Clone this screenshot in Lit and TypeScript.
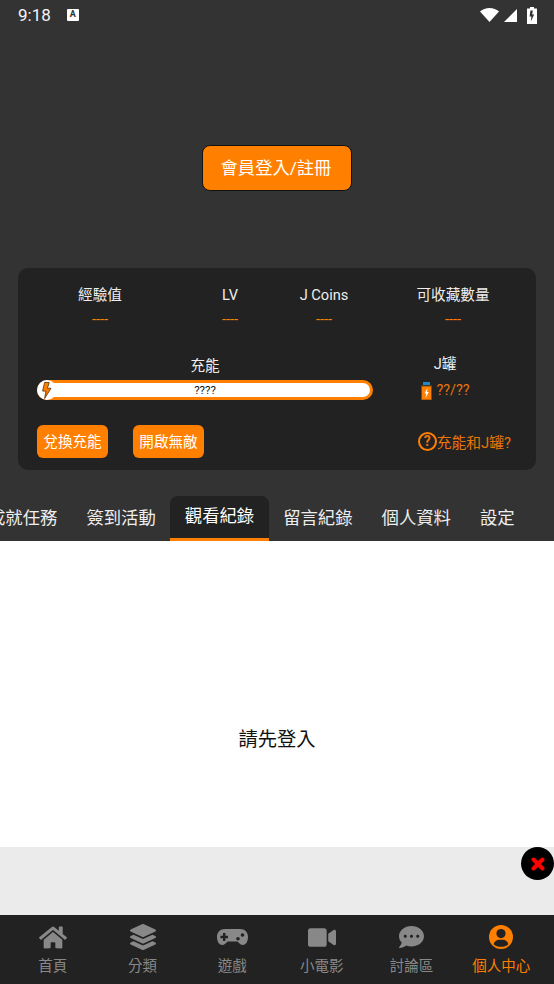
import { LitElement, html, css, svg } from "lit";
import { customElement } from "lit/decorators.js";

const stats = [
  ["經驗值", "----"],
  ["LV", "----"],
  ["J Coins", "----"],
  ["可收藏數量", "----"],
];
const tabs = ["成就任務", "簽到活動", "觀看紀錄", "留言紀錄", "個人資料", "設定"];

const homeIcon = html`<svg class="i-home" viewBox="0 0 576 512"><path d="M280.37 148.26L96 300.11V464a16 16 0 0 0 16 16l112.06-.29a16 16 0 0 0 15.92-16V368a16 16 0 0 1 16-16h64a16 16 0 0 1 16 16v95.64a16 16 0 0 0 16 16.05L464 480a16 16 0 0 0 16-16V300L295.67 148.26a12.19 12.19 0 0 0-15.3 0zM571.6 251.47L488 182.56V44.05a12 12 0 0 0-12-12h-56a12 12 0 0 0-12 12v72.61L318.47 43a48 48 0 0 0-61 0L4.34 251.47a12 12 0 0 0-1.6 16.9l25.5 31A12 12 0 0 0 45.15 301l235.22-193.74a12.19 12.19 0 0 1 15.3 0L530.9 301a12 12 0 0 0 16.9-1.6l25.5-31a12 12 0 0 0-1.7-16.93z"/></svg>`;
const layersIcon = html`<svg class="i-layers" viewBox="0 0 512 512"><path d="M12.41 148.02l232.94 105.67c6.8 3.09 14.49 3.09 21.29 0l232.94-105.67c16.55-7.51 16.55-32.52 0-40.03L266.65 2.31a25.607 25.607 0 0 0-21.29 0L12.41 107.98c-16.55 7.51-16.55 32.53 0 40.04zm487.18 88.28l-58.09-26.33-161.64 73.27c-7.56 3.43-15.59 5.17-23.86 5.17s-16.29-1.74-23.86-5.17L70.51 209.97l-58.1 26.33c-16.55 7.5-16.55 32.5 0 40l232.94 105.59c6.8 3.08 14.49 3.08 21.29 0L499.59 276.3c16.55-7.5 16.55-32.5 0-40zm0 127.8l-57.87-26.23-161.86 73.37c-7.56 3.43-15.59 5.17-23.86 5.17s-16.29-1.74-23.86-5.17L70.29 337.87 12.41 364.1c-16.55 7.5-16.55 32.5 0 40l232.94 105.59c6.8 3.08 14.49 3.08 21.29 0L499.59 404.1c16.55-7.5 16.55-32.5 0-40z"/></svg>`;
const padIcon = html`<svg class="i-pad" viewBox="0 0 31 16"><path d="M8 0H23C28 0 31 3.5 31 8C31 13 28.5 16 25.8 16C23.5 16 22 14 20.5 12.5H10.5C9 14 7.5 16 5.2 16C2.5 16 0 13 0 8C0 3.5 3 0 8 0Z"/><path class="cut" d="M6 4H8.4V6.8H11V9.2H8.4V12H6V9.2H3.4V6.8H6Z"/><circle class="cut" cx="21" cy="9.8" r="1.8"/><circle class="cut" cx="25.5" cy="6" r="1.8"/></svg>`;
const videoIcon = html`<svg class="i-video" viewBox="0 0 576 512"><path d="M336.2 64H47.8C21.4 64 0 85.4 0 111.8v288.4C0 426.6 21.4 448 47.8 448h288.4c26.4 0 47.8-21.4 47.8-47.8V111.8c0-26.4-21.4-47.8-47.8-47.8zm189.4 37.7L416 177.3v157.4l109.6 75.5c21.2 14.6 50.4-.3 50.4-25.8V127.5c0-25.4-29.1-40.4-50.4-25.8z"/></svg>`;
const chatIcon = html`<svg class="i-chat" viewBox="0 32 512 448"><path d="M256 32C114.6 32 0 125.1 0 240c0 49.6 21.4 95 57 130.7C44.5 421.1 2.7 466 2.2 466.5c-2.2 2.3-2.8 5.7-1.5 8.7S4.8 480 8 480c66.3 0 116-31.8 140.6-51.4 32.7 12.3 69 19.4 107.4 19.4 141.4 0 256-93.1 256-208S397.4 32 256 32zM128 272c-17.7 0-32-14.3-32-32s14.3-32 32-32 32 14.3 32 32-14.3 32-32 32zm128 0c-17.7 0-32-14.3-32-32s14.3-32 32-32 32 14.3 32 32-14.3 32-32 32zm128 0c-17.7 0-32-14.3-32-32s14.3-32 32-32 32 14.3 32 32-14.3 32-32 32z"/></svg>`;
const userIcon = html`<svg class="i-user" viewBox="0 0 24 24"><circle cx="12" cy="12" r="12"/><circle class="cut" cx="12" cy="8.6" r="4.6"/><path class="cut" d="M4.6 19.2C5.4 16.4 7.8 14.8 10 14.8H14C16.2 14.8 18.6 16.4 19.4 19.2C17.4 21 14.9 21.8 12 21.8C9.1 21.8 6.6 21 4.6 19.2Z"/></svg>`;

const navItems = [
  { label: "首頁", icon: homeIcon },
  { label: "分類", icon: layersIcon },
  { label: "遊戲", icon: padIcon },
  { label: "小電影", icon: videoIcon },
  { label: "討論區", icon: chatIcon },
  { label: "個人中心", icon: userIcon, active: true },
];

const bolt = svg`<path d="M7.2 0H2.6L0.6 8.6H4L2.6 16L9 5.8H5.4Z"/>`;

@customElement("app-root")
export class AppRoot extends LitElement {
  static styles = css`
    :host {
      display: flex;
      flex-direction: column;
      width: 554px;
      height: 984px;
      overflow: hidden;
      background: #333;
      color: #fff;
      font-family: Roboto, "Noto Sans CJK TC", sans-serif;
    }
    .status {
      height: 30px;
      flex: none;
      display: flex;
      align-items: center;
      padding: 0 17px 0 18px;
      box-sizing: border-box;
    }
    .time { font-size: 17px; line-height: 30px; color: #f4f4f4; }
    .a-badge {
      width: 12px;
      height: 12px;
      margin-left: 16px;
      background: #fff;
      border-radius: 1px;
      color: #333;
      font-size: 9px;
      font-weight: 700;
      line-height: 11px;
      text-align: center;
    }
    .sys { margin-left: auto; display: flex; align-items: center; }
    .sys svg { display: block; fill: #fff; }
    .wifi { width: 19px; height: 14px; }
    .signal { width: 13px; height: 13px; margin-left: 5px; }
    .batt { width: 10px; height: 17px; margin-left: 10px; }
    .batt .cut { fill: #333; }

    .hero { flex: none; display: flex; justify-content: center; padding: 115px 0 77px; }
    .login {
      width: 150px;
      height: 46px;
      box-sizing: border-box;
      display: flex;
      align-items: center;
      justify-content: center;
      background: #ff7f00;
      border: 1px solid #111;
      border-radius: 8px;
      font-size: 17.3px;
      padding: 0 2px 4px 0;
    }

    .panel {
      flex: none;
      margin: 0 18px;
      height: 202px;
      box-sizing: border-box;
      background: #222;
      border-radius: 10px;
      padding-top: 16px;
    }
    .stats { display: grid; grid-template-columns: 164px 96px 92px 1fr; text-align: center; }
    .stat-label { font-size: 14.6px; line-height: 22px; color: #eee; }
    .stat-value { font-size: 14.6px; line-height: 20px; margin-top: 3px; color: #ff7f00; }

    .charge { display: flex; padding-left: 19px; margin-top: 26px; }
    .charge-left { width: 336px; }
    .charge-label { text-align: center; font-size: 14.6px; line-height: 22px; color: #eee; }
    .bar {
      position: relative;
      margin-top: 3px;
      height: 20px;
      box-sizing: border-box;
      background: #fff;
      border: 3px solid #ff7f00;
      border-radius: 10px;
      color: #111;
      font-size: 11.5px;
      line-height: 15px;
      text-align: center;
    }
    .bolt-badge {
      position: absolute;
      left: -3px;
      top: -3px;
      width: 20px;
      height: 20px;
      border-radius: 50%;
      background: #fff;
      display: flex;
      align-items: center;
      justify-content: center;
    }
    .bolt-badge svg { width: 10px; height: 17px; fill: #ff7f00; stroke: #5a3000; stroke-width: 0.8; }
    .charge-right {
      width: 62px;
      margin-left: 41px;
      display: flex;
      flex-direction: column;
      align-items: center;
      margin-top: -1px;
    }
    .jar-label { font-size: 14.6px; line-height: 20px; color: #eee; }
    .jar-row { display: flex; align-items: center; margin-top: 8px; color: #e8740a; font-size: 14.4px; line-height: 18px; white-space: nowrap; }
    .jar-row svg { width: 13px; height: 18px; margin-right: 3px; display: block; flex: none; }

    .actions { display: flex; align-items: center; padding: 0 25px 0 19px; margin-top: 25px; }
    .act {
      width: 71px;
      height: 33px;
      box-sizing: border-box;
      padding-bottom: 2px;
      display: flex;
      align-items: center;
      justify-content: center;
      background: #ff7f00;
      border-radius: 6px;
      font-size: 14.6px;
      margin-right: 25px;
    }
    .help { margin-left: auto; padding-bottom: 1px; display: flex; align-items: center; color: #e8740a; font-size: 14.8px; }
    .q {
      width: 19px;
      height: 19px;
      box-sizing: border-box;
      border: 2px solid #ff7f00;
      border-radius: 50%;
      font-size: 14px;
      font-weight: 700;
      line-height: 15px;
      text-align: center;
    }

    .tabs { flex: none; display: flex; margin: 26px 0 0 -26.5px; height: 45px; }
    .tab {
      flex: none;
      box-sizing: border-box;
      padding: 0 14.5px;
      font-size: 17.35px;
      line-height: 44px;
      color: #eee;
      white-space: nowrap;
    }
    .tab.on {
      background: #222;
      border-radius: 8px 8px 0 0;
      border-bottom: 3px solid #ff7f00;
      line-height: 40px;
      color: #fff;
    }

    .content {
      flex: none;
      height: 306px;
      box-sizing: border-box;
      background: #fff;
      color: #111;
      padding-top: 185px;
      text-align: center;
      font-size: 19.3px;
      line-height: 28px;
    }
    .ad { position: relative; flex: none; height: 68px; background: #ebebeb; }
    .close {
      position: absolute;
      top: 0;
      right: 0;
      width: 33px;
      height: 33px;
      border-radius: 50%;
      background: #000;
      display: flex;
      align-items: center;
      justify-content: center;
    }
    .close svg { width: 14px; height: 14px; stroke: #f00; stroke-width: 4; stroke-linecap: round; }

    .nav { flex: none; height: 69px; background: #222; display: flex; padding: 0 8px; box-sizing: border-box; }
    .nav-item {
      flex: 1 1 0;
      min-width: 0;
      display: flex;
      flex-direction: column;
      align-items: center;
      color: #888;
    }
    .nav-item.on { color: #ff7f00; }
    .nav-icon { height: 42px; display: flex; align-items: center; justify-content: center; padding-top: 3px; padding-bottom: 1px; box-sizing: border-box; }
    .nav-icon svg { display: block; fill: currentColor; }
    .nav-icon .cut { fill: #222; }
    .i-home { width: 28px; height: 25px; }
    .i-layers { width: 26px; height: 26px; }
    .i-pad { width: 31px; height: 16px; }
    .i-video { width: 28px; height: 25px; }
    .i-chat { width: 25px; height: 22px; }
    .i-user { width: 24px; height: 24px; }
    .nav-label { font-size: 14.5px; line-height: 20px; white-space: nowrap; }
  `;

  render() {
    return html`
      <div class="status">
        <span class="time">9:18</span>
        <span class="a-badge">A</span>
        <div class="sys">
          <svg class="wifi" viewBox="0 0 19 14"><path d="M0 3.6C2.6 1.3 5.9 0 9.5 0S16.4 1.3 19 3.6L9.5 14Z"/></svg>
          <svg class="signal" viewBox="0 0 13 13"><path d="M13 0V13H0Z"/></svg>
          <svg class="batt" viewBox="0 0 10 17"><path d="M3 0H7V1.5H10V17H0V1.5H3Z"/><path class="cut" d="M5.8 3.5H3.4L2.6 9.5H4.4L3.8 14.5L7.2 7.5H5.2Z"/></svg>
        </div>
      </div>

      <div class="hero"><div class="login">會員登入/註冊</div></div>

      <div class="panel">
        <div class="stats">
          ${stats.map(([l, v]) => html`<div><div class="stat-label">${l}</div><div class="stat-value">${v}</div></div>`)}
        </div>
        <div class="charge">
          <div class="charge-left">
            <div class="charge-label">充能</div>
            <div class="bar">
              <span class="bolt-badge"><svg viewBox="0 0 10 16">${bolt}</svg></span>????
            </div>
          </div>
          <div class="charge-right">
            <div class="jar-label">J罐</div>
            <div class="jar-row">
              <svg viewBox="0 0 13 18">
                <rect x="3" y="0" width="7" height="3" fill="#1e88c8"></rect>
                <rect x="1.5" y="4" width="10" height="14" fill="#ff7f00" stroke="#7a4a10" stroke-width="1"></rect>
                <path d="M7.5 6L4.5 11.5H6.3L5.5 16L8.8 10H7Z" fill="#fff"></path>
              </svg>
              ??/??
            </div>
          </div>
        </div>
        <div class="actions">
          <div class="act">兌換充能</div>
          <div class="act">開啟無敵</div>
          <div class="help"><span class="q">?</span>充能和J罐?</div>
        </div>
      </div>

      <div class="tabs">
        ${tabs.map((t) => html`<div class="tab ${t === "觀看紀錄" ? "on" : ""}">${t}</div>`)}
      </div>

      <div class="content">請先登入</div>

      <div class="ad">
        <div class="close">
          <svg viewBox="0 0 14 14"><path d="M2.5 2.5L11.5 11.5M11.5 2.5L2.5 11.5"/></svg>
        </div>
      </div>

      <div class="nav">
        ${navItems.map(
          (n) => html`<div class="nav-item ${n.active ? "on" : ""}">
            <div class="nav-icon">${n.icon}</div>
            <div class="nav-label">${n.label}</div>
          </div>`
        )}
      </div>
    `;
  }
}
